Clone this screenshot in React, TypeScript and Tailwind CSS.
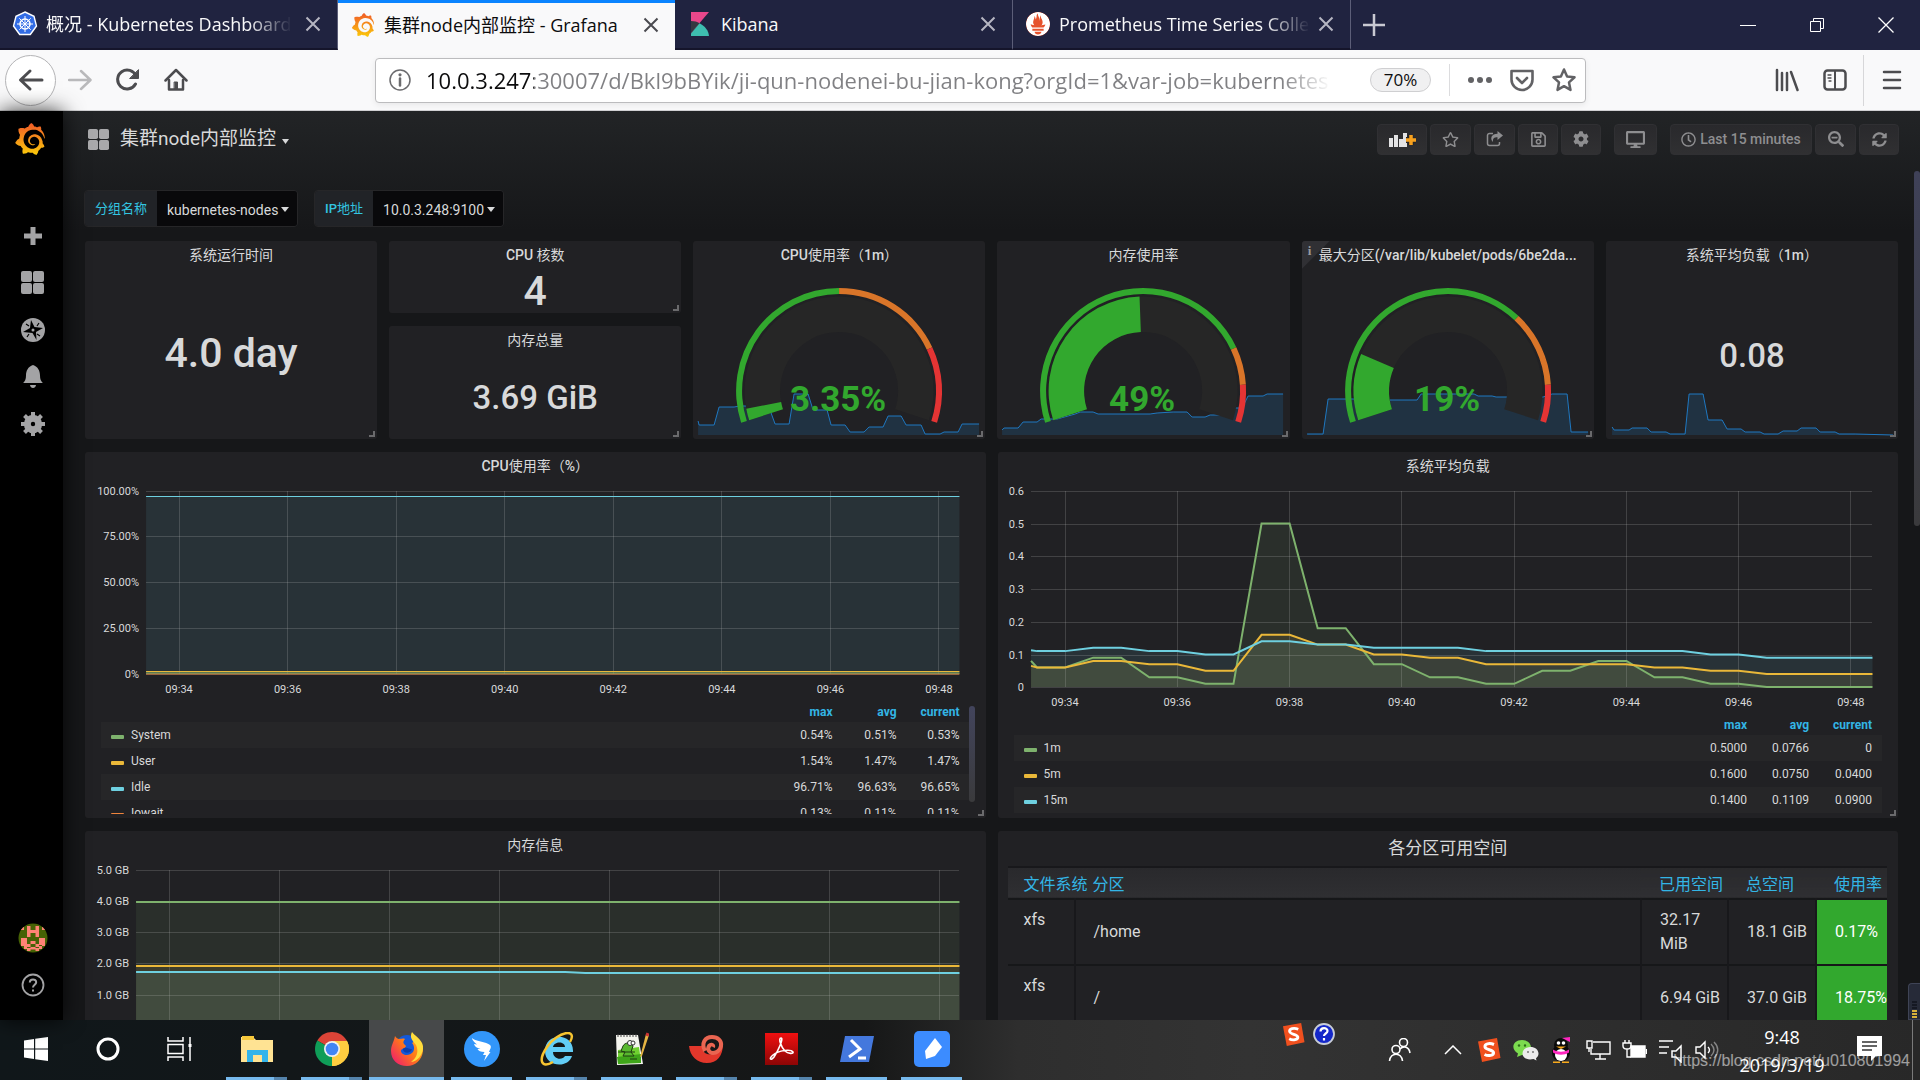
import React from "react";
import { SiGrafana, SiPrometheus } from "react-icons/si";
import {
  FaCog,
  FaDesktop,
  FaRegClock,
  FaRegSave,
  FaRegStar,
  FaSearchMinus,
  FaSyncAlt,
} from "react-icons/fa";

type Pt = [number, number];

const line = (pts: Pt[]) => pts.map(([x, y], i) => `${i ? "L" : "M"}${x} ${y}`).join("");
const area = (pts: Pt[], base: number) =>
  `${line(pts)}L${pts[pts.length - 1][0]} ${base}L${pts[0][0]} ${base}Z`;

/* ---------- browser chrome ---------- */

function CloseX({ dark }: { dark?: boolean }) {
  return (
    <svg viewBox="0 0 16 16" className={dark ? "size-4 text-[#4a4a4f]" : "size-4 text-[#b6b6c2]"} aria-hidden>
      <path d="M1.500 1.500l13 13M14.500 1.500l-13 13" stroke="currentColor" strokeWidth="2" fill="none" />
    </svg>
  );
}

function KibanaLogo() {
  return (
    <svg viewBox="0 0 18 24" className="h-6 w-[18px]" aria-hidden>
      <path d="M0 0h18L0 21z" fill="#e8478b" />
      <path d="M0 9c3.500 0 6 .7 8.600 2.200L0 21z" fill="#343741" />
      <path d="M8.600 11.200C14 14 17.500 18.500 18 24H0v-2.500z" fill="#3ebeb0" />
    </svg>
  );
}

function Tab({
  icon,
  title,
  active,
  fade,
}: {
  icon: React.ReactNode;
  title: string;
  active?: boolean;
  fade?: boolean;
}) {
  return (
    <div
      className={
        active
          ? "flex h-[50px] w-[337px] items-center border-t-[3px] border-[#0a84ff] bg-[#f9f9fa] pr-3 pb-[3px] pl-3 text-[#0c0c0d]"
          : "flex h-[50px] w-[338px] items-center border-r border-b-2 border-r-[#5c5e78] border-b-[#15152b] bg-[#202340] pr-3 pl-3 text-[#f9f9fa]"
      }
    >
      <button
        type="button"
        role="tab"
        aria-selected={!!active}
        className="flex min-w-0 flex-1 items-center gap-2 text-left text-[18px] leading-7"
      >
        <span className="flex w-[26px] shrink-0 justify-center">{icon}</span>
        <span
          className={
            fade
              ? "overflow-hidden whitespace-nowrap [mask-image:linear-gradient(to_right,black_82%,transparent)]"
              : "overflow-hidden whitespace-nowrap"
          }
        >
          {title}
        </span>
      </button>
      <button type="button" aria-label="Close tab" className="ml-1 flex size-6 items-center justify-center">
        <CloseX dark={active} />
      </button>
    </div>
  );
}

function TabStrip() {
  return (
    <div className="flex h-[50px] shrink-0 items-center bg-[#202340]">
      <div role="tablist" className="flex">
        <Tab
          fade
          title="概况 - Kubernetes Dashboard"
          icon={
            <svg viewBox="0 0 26 26" className="size-[26px]" aria-hidden>
              <path d="M13 1l9 4.300 2.500 9.700-6.200 8.500H7.700L1.500 15 4 5.300z" fill="#326ce5" stroke="#fff" strokeWidth="1.400" />
              <circle cx="13" cy="13" r="5" fill="none" stroke="#fff" strokeWidth="1.500" />
              <path d="M13 5v16M5 13h16M7.300 7.300l11.400 11.400M18.700 7.300L7.300 18.700" stroke="#fff" strokeWidth="1" />
            </svg>
          }
        />
        <Tab active title="集群node内部监控 - Grafana" icon={<SiGrafana size={24} fill="url(#grafana)" />} />
        <Tab title="Kibana" icon={<KibanaLogo />} />
        <Tab
          fade
          title="Prometheus Time Series Collection"
          icon={<SiPrometheus size={24} className="rounded-full bg-[#e6522c] text-white" />}
        />
      </div>
      <button type="button" aria-label="New tab" className="ml-[11px] flex size-6 items-center justify-center">
        <svg viewBox="0 0 22 22" className="size-[22px] text-[#c9c9d2]" aria-hidden>
          <path d="M11 0v22M0 11h22" stroke="currentColor" strokeWidth="2.500" />
        </svg>
      </button>
      <div className="ml-auto flex text-white">
        <button type="button" aria-label="Minimize" className="flex h-12 w-[69px] items-center justify-center">
          <svg viewBox="0 0 16 16" className="size-4" aria-hidden><path d="M0 8.500h16" stroke="currentColor" /></svg>
        </button>
        <button type="button" aria-label="Restore" className="flex h-12 w-[69px] items-center justify-center">
          <svg viewBox="0 0 16 16" className="size-4" aria-hidden>
            <path d="M1.500 4.500h10v10h-10zM4.500 4V1.500h10v10H12" fill="none" stroke="currentColor" />
          </svg>
        </button>
        <button type="button" aria-label="Close" className="flex h-12 w-[69px] items-center justify-center">
          <svg viewBox="0 0 16 16" className="size-4" aria-hidden>
            <path d="M.5.5l15 15M15.500.5l-15 15" stroke="currentColor" strokeWidth="1.300" />
          </svg>
        </button>
      </div>
    </div>
  );
}

function NavIcon({ label, children, className }: { label: string; children: React.ReactNode; className?: string }) {
  return (
    <button type="button" aria-label={label} className={`flex size-12 shrink-0 items-center justify-center ${className ?? ""}`}>
      <svg viewBox="0 0 24 24" className="size-6" fill="none" stroke="currentColor" strokeWidth="2.500" strokeLinecap="round" strokeLinejoin="round" aria-hidden>
        {children}
      </svg>
    </button>
  );
}

function NavBar() {
  return (
    <div className="flex h-[61px] shrink-0 items-center border-b border-[#d0d0d2] bg-[#f9f9fa] px-[5px] text-[#4c4c4f]">
      <button
        type="button"
        aria-label="Back"
        className="flex size-[51px] shrink-0 items-center justify-center rounded-full border border-[#b4b4b6] bg-white"
      >
        <svg viewBox="0 0 26 24" className="h-6 w-[26px]" fill="none" stroke="currentColor" strokeWidth="3" strokeLinecap="round" strokeLinejoin="round" aria-hidden>
          <path d="M24 12H3M12 3l-9.500 9 9.500 9" />
        </svg>
      </button>
      <NavIcon label="Forward" className="text-[#b9b9bb]"><path d="M1 12h21M13 3l9.500 9-9.500 9" /></NavIcon>
      <NavIcon label="Reload">
        <path d="M19.500 16A9.500 9.500 0 1 1 20 8" strokeWidth="3" />
        <path d="M22.500 2v8.500H14z" fill="currentColor" strokeWidth="1" />
      </NavIcon>
      <NavIcon label="Home">
        <path d="M1.500 12.500L12 2l10.500 10.500" />
        <path d="M5 12v9.500h14V12" />
        <path d="M10.500 14h3v7h-3z" fill="currentColor" strokeWidth="1" />
      </NavIcon>
      <div className="ml-[175px] flex h-[45px] w-[1211px] shrink items-center rounded-sm border border-[#bcbcbe] bg-white shadow-[0_2px_6px_rgba(0,0,0,0.07)]">
        <button type="button" aria-label="Site information" className="ml-3 shrink-0">
          <svg viewBox="0 0 24 24" className="size-6 text-[#6b6b6e]" aria-hidden>
            <circle cx="12" cy="12" r="10" fill="none" stroke="currentColor" strokeWidth="1.500" />
            <path d="M12 10.500v7" stroke="currentColor" strokeWidth="2.500" strokeLinecap="round" />
            <circle cx="12" cy="6.800" r="1.600" fill="currentColor" />
          </svg>
        </button>
        <input
          type="text"
          aria-label="Address"
          readOnly
          value="10.0.3.247:30007/d/Bkl9bBYik/ji-qun-nodenei-bu-jian-kong?orgId=1&var-job=kubernetes"
          className="ml-[14px] h-10 w-[920px] min-w-0 bg-[linear-gradient(to_right,#0c0c0d_108px,#808083_108px,#808083_855px,transparent_905px)] bg-clip-text text-[22px] text-transparent outline-none"
        />
        <button
          type="button"
          className="ml-auto h-6 w-[61px] shrink-0 rounded-full border border-[#cfcfd1] bg-[#f0f0f1] text-[17px] leading-[22px] text-[#0c0c0d]"
        >
          70%
        </button>
        <span className="ml-[18px] h-8 w-px shrink-0 bg-[#dcdcde]" />
        <div className="ml-[9px] flex text-[#626265]">
          <button type="button" aria-label="Page actions" className="flex h-10 w-[42px] items-center justify-center">
            <svg viewBox="0 0 26 8" className="h-2 w-[26px]" fill="currentColor" aria-hidden>
              <circle cx="4" cy="4" r="3" /><circle cx="13" cy="4" r="3" /><circle cx="22" cy="4" r="3" />
            </svg>
          </button>
          <button type="button" aria-label="Save to Pocket" className="flex h-10 w-[42px] items-center justify-center">
            <svg viewBox="0 0 24 24" className="size-6" fill="none" stroke="currentColor" strokeWidth="2.600" strokeLinecap="round" strokeLinejoin="round" aria-hidden>
              <path d="M1.500 3h21v8.500a10.500 10.500 0 0 1-21 0z" /><path d="M7 10l5 5 5-5" />
            </svg>
          </button>
          <button type="button" aria-label="Bookmark" className="flex h-10 w-[42px] items-center justify-center">
            <svg viewBox="0 0 24 24" className="size-6" fill="none" stroke="currentColor" strokeWidth="2.500" strokeLinejoin="round" aria-hidden>
              <path d="M12 1.500l3.100 7 7.400.8-5.500 5.100 1.500 7.500L12 18.200l-6.500 3.700L7 14.400 1.500 9.300l7.400-.8z" />
            </svg>
          </button>
        </div>
      </div>
      <div className="ml-auto flex items-center">
        <NavIcon label="Library">
          <path d="M2 2v20M7 5v17M12 5v17M16 4l6.500 18" />
        </NavIcon>
        <NavIcon label="Sidebars">
          <rect x="1.500" y="2.500" width="21" height="19" rx="3" />
          <path d="M12 3v18" strokeWidth="2" /><path d="M5 7h3M5 10h3M6 13h2" strokeWidth="1.300" />
        </NavIcon>
        <span className="ml-1 h-[51px] w-px bg-[#d7d7d9]" />
        <NavIcon label="Menu" className="mr-[-1px] ml-1">
          <path d="M4 4h16M4 12h16M4 20h16" />
        </NavIcon>
      </div>
    </div>
  );
}

/* ---------- Grafana side menu ---------- */

function GridGlyph({ className }: { className: string }) {
  return (
    <svg viewBox="0 0 23 23" className={className} fill="currentColor" aria-hidden>
      <rect x="0" y="0" width="11" height="11" rx="2" /><rect x="12" y="0" width="11" height="11" rx="2" />
      <rect x="0" y="12" width="11" height="11" rx="2" /><rect x="12" y="12" width="11" height="11" rx="2" />
    </svg>
  );
}

function SideButton({ label, children }: { label: string; children: React.ReactNode }) {
  return (
    <button type="button" aria-label={label} className="flex h-[47px] w-full items-center justify-center text-[#a3a3a5]">
      {children}
    </button>
  );
}

function SideMenu() {
  return (
    <nav className="z-10 flex w-[63px] shrink-0 flex-col items-center bg-black shadow-[0_0_20px_rgba(0,0,0,0.8)]">
      <a href="#home" aria-label="Grafana" className="mt-3 mr-[3px] block">
        <SiGrafana size={32} fill="url(#grafana)" />
      </a>
      <div className="mt-[57px] w-full pl-[2px]">
        <SideButton label="Create">
          <svg viewBox="0 0 18 18" className="size-[18px]" aria-hidden><path d="M9 0v18M0 9h18" stroke="currentColor" strokeWidth="5" /></svg>
        </SideButton>
        <SideButton label="Dashboards"><GridGlyph className="size-[23px]" /></SideButton>
        <SideButton label="Explore">
          <svg viewBox="0 0 24 24" className="size-[24px]" aria-hidden>
            <circle cx="12" cy="12" r="12" fill="currentColor" />
            <path d="M10 2l3.500 7L22 10l-7 4 .5 8-4-7L2 14l7-4z" fill="#000" />
            <path d="M5 6l3 2M18 5l-2 3M6 19l2-3M19 18l-3-2" stroke="#000" strokeWidth="1.200" />
            <circle cx="12" cy="12" r="1.500" fill="currentColor" />
          </svg>
        </SideButton>
        <SideButton label="Alerting">
          <svg viewBox="0 0 20 24" className="h-6 w-5" fill="currentColor" aria-hidden>
            <path d="M10 0c5 1.500 7 6 7 10.500 0 4 1 5.500 2.800 7.500H.2C2 16 3 14.500 3 10.500 3 6 5 1.500 10 0zM7 20h6c-.4 4-5.600 4-6 0z" />
          </svg>
        </SideButton>
        <SideButton label="Configuration">
          <svg viewBox="0 0 24 24" className="size-6" aria-hidden>
            <circle cx="12" cy="12" r="5.700" fill="none" stroke="currentColor" strokeWidth="7" />
            <path d="M12 0v5M12 19v5M0 12h5M19 12h5M3.500 3.500L7 7M17 17l3.500 3.500M20.500 3.500L17 7M7 17l-3.500 3.500" stroke="currentColor" strokeWidth="4" />
          </svg>
        </SideButton>
      </div>
      <div className="mt-auto mb-3 w-full pl-[2px]">
        <SideButton label="Profile">
          <svg viewBox="0 0 30 30" className="size-[30px]" aria-hidden>
            <clipPath id="avatarClip"><circle cx="15" cy="15" r="14.500" /></clipPath>
            <g clipPath="url(#avatarClip)">
              <rect width="30" height="30" fill="#466204" />
              <path
                d="M9 3h3.500v4h5V3H21v11h-3.500v-4h-5v4H9zM3 4h3v3H3zM24 4h3v3h-3zM3 15h6v6h3.500v3H9v-1H3zM27 15h-6v6h-3.500v3H21v-1h6zM12.500 18h5v3h-5zM6 22h3v4H6zM21 22h3v4h-3zM12.500 24h5v2.500h-5zM9 25h3.500v3H9zM17.500 25H21v3h-3.500z"
                fill="#ff8375"
              />
            </g>
          </svg>
        </SideButton>
        <SideButton label="Help">
          <svg viewBox="0 0 24 24" className="size-6" fill="none" stroke="currentColor" strokeWidth="1.800" aria-hidden>
            <circle cx="12" cy="12" r="10.500" />
            <path d="M8.800 9.500c0-4 6.400-4 6.400-.3 0 2.500-3.200 2.600-3.200 5.300M12 16.500v2" strokeWidth="2" />
          </svg>
        </SideButton>
      </div>
    </nav>
  );
}

/* ---------- dashboard header ---------- */

function ToolButton({ label, children, className }: { label: string; children: React.ReactNode; className?: string }) {
  return (
    <button
      type="button"
      aria-label={label}
      className={`flex h-[31px] items-center justify-center rounded-sm border border-[#303033] bg-linear-to-b from-[#29292c] to-[#303032] text-[#8e8e90] ${className ?? "w-[40px]"}`}
    >
      {children}
    </button>
  );
}

function DashHeader() {
  return (
    <header className="flex h-14 items-center pr-[21px] pl-[25px]">
      <button type="button" className="flex items-center text-[19px] text-[#d8d9da]">
        <GridGlyph className="mr-[11px] size-[21px] text-[#a9a9ab]" />
        集群node内部监控
        <svg viewBox="0 0 8 5" className="mt-1 ml-[6px] h-[5px] w-2" fill="currentColor" aria-hidden><path d="M0 0h7L3.500 5z" /></svg>
      </button>
      <div className="ml-auto flex items-center gap-[3px]">
        <ToolButton label="Add panel" className="w-[50px]">
          <svg viewBox="0 0 27 17" className="h-[17px] w-[27px]" aria-hidden>
            <path d="M0 7h4v9H0zM5 4h4v12H5zM10 8h4v8h-4zM14 2h4v14h-4z" fill="#e3e3e4" />
            <path d="M22 4v10M17 9h10" stroke="#262628" strokeWidth="6" />
            <path d="M22 4v10M17 9h10" stroke="#f7a11e" strokeWidth="3.500" />
          </svg>
        </ToolButton>
        <ToolButton label="Star" className="w-[41px]"><FaRegStar size={17} /></ToolButton>
        <ToolButton label="Share" className="w-[41px]">
          <svg viewBox="0 0 17 16" className="h-4 w-[17px]" aria-hidden>
            <path d="M7 2.500H3.500a2 2 0 0 0-2 2v8a2 2 0 0 0 2 2h8a2 2 0 0 0 2-2V11" fill="none" stroke="currentColor" strokeWidth="1.500" />
            <path d="M11.500 0L17 4.500 11.500 9V6.300C8 6.300 6.500 7.500 7 11 3.500 7.500 5.500 2.700 11.500 2.700z" fill="currentColor" />
          </svg>
        </ToolButton>
        <ToolButton label="Save"><FaRegSave size={17} /></ToolButton>
        <ToolButton label="Settings"><FaCog size={16} /></ToolButton>
        <ToolButton label="Cycle view mode" className="mx-[10px] w-[43px]"><FaDesktop size={19} /></ToolButton>
        <ToolButton label="Time range" className="w-[142px] gap-1 text-sm font-medium"><FaRegClock size={15} />Last 15 minutes</ToolButton>
        <ToolButton label="Zoom out" className="w-[41px]"><FaSearchMinus size={16} /></ToolButton>
        <ToolButton label="Refresh"><FaSyncAlt size={15} /></ToolButton>
      </div>
    </header>
  );
}

/* Latin runs are set in medium weight, Chinese runs in regular. */
function Mixed({ text }: { text: string }) {
  return (
    <>
      {text.split(/([\x21-\x7e]+)/).map((part, i) =>
        i % 2 ? <span key={i}>{part}</span> : <span key={i} className="font-normal">{part}</span>,
      )}
    </>
  );
}

function Variable({ id, label, value, className }: { id: string; label: string; value: string; className: string }) {
  return (
    <div className="flex h-[37px] overflow-hidden rounded-sm border border-[#262628]">
      <label htmlFor={id} className="flex items-center bg-[#212327] px-[10px] text-[13px] font-medium text-[#33c5e0]">
        <Mixed text={label} />
      </label>
      <div className="relative flex">
        <select id={id} className={`appearance-none bg-[#09090b] pt-[2px] pl-[10px] text-sm text-[#d8d9da] outline-none ${className}`}>
          <option>{value}</option>
        </select>
        <svg viewBox="0 0 8 5" className="pointer-events-none absolute top-[16px] right-2 h-[5px] w-2" fill="#d8d9da" aria-hidden>
          <path d="M0 0h8L4 5z" />
        </svg>
      </div>
    </div>
  );
}

/* ---------- panels ---------- */

function Panel({ title, children, className, info, big }: {
  title: string;
  children?: React.ReactNode;
  className?: string;
  info?: boolean;
  big?: boolean;
}) {
  return (
    <section className={`relative flex min-w-0 flex-col overflow-hidden rounded-[3px] bg-[#212124] ${className ?? ""}`}>
      {info && (
        <span className="absolute top-0 left-0 h-7 w-7 bg-[#303034] pl-[6px] font-['Liberation_Serif',serif] text-[13px] font-bold text-[#9a9a9c] [clip-path:polygon(0_0,100%_0,0_100%)]">
          i
        </span>
      )}
      <h2
        className={
          big
            ? "h-[35px] shrink-0 pt-[5px] text-center text-[17px] leading-[24px] text-[#d8d9da]"
            : "h-[30px] shrink-0 truncate px-4 text-center text-[14px] leading-[29px] font-medium text-[#d8d9da]"
        }
      >
        <Mixed text={title} />
      </h2>
      {children}
      <svg viewBox="0 0 6 6" className="absolute right-[2px] bottom-[2px] size-[6px]" aria-hidden>
        <path d="M5 0v5H0" fill="none" stroke="#6a6a6c" strokeWidth="2" />
      </svg>
    </section>
  );
}

function Stat({ value, className }: { value: string; className: string }) {
  return <div className={`flex flex-1 items-center justify-center font-medium text-[#d8d9da] ${className}`}>{value}</div>;
}

const CX = 146;
const CY = 150;

function ring(from: number, to: number, r1: number, r2: number) {
  const at = (f: number, r: number) => {
    const t = Math.PI * (1.1 - 1.2 * f);
    return `${(CX + r * Math.cos(t)).toFixed(2)} ${(CY - r * Math.sin(t)).toFixed(2)}`;
  };
  const large = (to - from) * 216 > 180 ? 1 : 0;
  return `M${at(from, r2)}A${r2} ${r2} 0 ${large} 1 ${at(to, r2)}L${at(to, r1)}A${r1} ${r1} 0 ${large} 0 ${at(from, r1)}Z`;
}

function Spark({ pts }: { pts: Pt[] }) {
  return (
    <>
      <path d={area(pts, 194)} fill="#1f76bd" fillOpacity="0.2" />
      <path d={line(pts)} fill="none" stroke="#1f78c1" strokeWidth="1" />
    </>
  );
}

function Gauge({ value, text, stops, pts }: { value: number; text: string; stops: [number, number]; pts: Pt[] }) {
  return (
    <svg viewBox="0 30 292 168" className="block w-full" role="img" aria-label={text}>
      <Spark pts={pts} />
      <path d={ring(0, 1, 59, 94.500)} fill="#262626" />
      <path d={ring(0, value, 59, 94.500)} fill="#32a82e" />
      <path d={ring(0, stops[0], 97, 103)} fill="#32a82e" />
      <path d={ring(stops[0], stops[1], 97, 103)} fill="#d97529" />
      <path d={ring(stops[1], 1, 97, 103)} fill="#e43434" />
      <text x="145" y="170" textAnchor="middle" fontSize="35" fontWeight="700" fill="#32a82e">{text}</text>
    </svg>
  );
}

const cpuSpark: Pt[] = [[5,180],[6,184],[21,184],[26,166],[41,166],[47,165],[75,165],[78,172],[82,183],[96,183],[101,153],[115,153],[120,169],[134,169],[138,184],[152,184],[157,191],[171,191],[176,186],[190,186],[195,175],[208,175],[213,184],[228,184],[232,193],[247,193],[251,191],[265,191],[269,183],[286,183]];
const memSpark: Pt[] = [[5,189],[7,187],[21,187],[26,181],[40,181],[44,178],[60,178],[78,173],[83,171],[96,171],[101,173],[153,173],[160,172],[176,171],[190,171],[195,176],[208,176],[213,174],[228,174],[239,167],[245,167],[251,155],[266,155],[270,153],[286,153]];
const diskSpark: Pt[] = [[5,193],[21,193],[26,158],[52,158],[87,159],[115,159],[119,153],[172,153],[176,155],[190,155],[194,156],[241,156],[250,153],[265,153],[269,191],[286,191]];
const loadSpark: Pt[] = [[6,186],[8,189],[23,189],[26,187],[41,187],[45,191],[60,191],[64,193],[79,193],[83,153],[97,153],[102,179],[116,179],[121,188],[135,188],[139,191],[154,191],[158,193],[172,193],[177,190],[191,190],[195,187],[210,187],[214,191],[229,191],[233,193],[249,193],[287,194]];

interface Series { color: string; pts: Pt[]; fill?: number; width?: number }

function Chart({ bottom, left, right, base, top, yTicks, xStart, xStep, series }: {
  bottom: number;
  left: number;
  right: number;
  base: number;
  top: number;
  yTicks: { y: number; label: string }[];
  xStart: number;
  xStep: number;
  series: Series[];
}) {
  const times = ["09:34", "09:36", "09:38", "09:40", "09:42", "09:44", "09:46", "09:48"];
  return (
    <svg viewBox={`0 30 900 ${bottom - 30}`} className="block w-full shrink-0" role="img" aria-label="graph">
      {series.map((s, i) => <path key={i} d={area(s.pts, base)} fill={s.color} fillOpacity={s.fill ?? 0.1} />)}
      <g stroke="#c8c8c8" strokeOpacity="0.2" strokeWidth="1" shapeRendering="crispEdges">
        {yTicks.map((t) => <path key={t.label} d={`M${left} ${t.y}H${right}`} />)}
        {times.map((t, i) => <path key={t} d={`M${xStart + i * xStep} ${top}V${base}`} />)}
      </g>
      {series.map((s, i) => <path key={i} d={line(s.pts)} fill="none" stroke={s.color} strokeWidth={s.width ?? 2} />)}
      <g fontSize="11" fill="#d8d9da">
        {yTicks.map((t) => <text key={t.label} x={left - 7} y={t.y + 4} textAnchor="end">{t.label}</text>)}
        {times.map((t, i) => <text key={t} x={xStart + i * xStep} y={base + 19} textAnchor="middle">{t}</text>)}
      </g>
    </svg>
  );
}

function Legend({ rows, colClass }: {
  rows: { color: string; name: string; v: [string, string, string] }[];
  colClass: string;
}) {
  return (
    <table className="mx-4 text-xs text-[#d8d9da]">
      <thead>
        <tr className="h-5 text-right font-bold text-[#33b5e5]">
          <th />
          <th className={`p-0 text-right ${colClass}`}>max</th>
          <th className={`p-0 text-right ${colClass}`}>avg</th>
          <th className="w-[73px] p-0 pr-[10px] text-right">current</th>
        </tr>
      </thead>
      <tbody>
        {rows.map((r) => (
          <tr key={r.name} className="h-[26px] odd:bg-[#262628]">
            <td className="p-0 pl-[10px]">
              <span className="flex items-center gap-[7px]">
                <svg viewBox="0 0 13 4" className="mt-1 h-1 w-[13px]" aria-hidden><rect width="13" height="4" rx="1" fill={r.color} /></svg>
                {r.name}
              </span>
            </td>
            <td className="p-0 text-right">{r.v[0]}</td>
            <td className="p-0 text-right">{r.v[1]}</td>
            <td className="p-0 pr-[10px] text-right">{r.v[2]}</td>
          </tr>
        ))}
      </tbody>
    </table>
  );
}

const GREEN = "#7eb26d";
const YELLOW = "#eab839";
const CYAN = "#6ed0e0";
const ORANGE = "#ef843c";

const load1 = [.08,.06,.06,.09,.09,.03,.03,.01,.01,.5,.5,.18,.18,.07,.07,.03,.03,.01,.01,.05,.05,.08,.08,.03,.03,.01,.01,0,0,0,0,0];
const load5 = [.065,.06,.06,.08,.08,.07,.07,.05,.05,.16,.16,.13,.13,.1,.1,.09,.09,.07,.07,.07,.07,.07,.07,.06,.06,.05,.05,.04,.04,.04,.04,.04];
const load15 = [.113,.11,.11,.12,.12,.11,.11,.1,.1,.14,.14,.13,.13,.12,.12,.12,.12,.11,.11,.11,.11,.11,.11,.11,.11,.1,.1,.09,.09,.09,.09,.09];
const loadPts = (vals: number[]): Pt[] =>
  vals.map((v, i) => [i === 0 ? 33 : Math.min(39 + (i - 1) * 28.05, 874), 235 - v * 327]);

function DiskTable() {
  const rows = [
    { fs: "xfs", mount: "/home", used: "32.17 MiB", total: "18.1 GiB", pct: "0.17%" },
    { fs: "xfs", mount: "/", used: "6.94 GiB", total: "37.0 GiB", pct: "18.75%" },
  ];
  return (
    <div className="mr-[11px] ml-[10px] overflow-hidden border-t-2 border-[#18181b]">
      <table className="w-full table-fixed text-base leading-6 text-[#d8d9da]">
        <thead>
          <tr className="h-[31px] border-b-2 border-[#161719] bg-linear-to-b from-[#29292c] to-[#2f2f32] text-left whitespace-nowrap text-[#33b5e5]">
            <th className="w-[67px] p-0 pt-1 pl-4 font-normal">文件系统</th>
            <th className="p-0 pt-1 pl-[18px] font-normal">分区</th>
            <th className="w-[87px] p-0 pt-1 pl-[18px] font-normal">已用空间</th>
            <th className="w-[88px] p-0 pt-1 pl-[18px] font-normal">总空间</th>
            <th className="w-[71px] p-0 pt-1 pl-[18px] font-normal">使用率</th>
          </tr>
        </thead>
        <tbody>
          {rows.map((r) => (
            <tr key={r.mount} className="h-[66px] border-b-2 border-[#161719]">
              <td className="border-r-2 border-[#18181b] p-0 pt-2 pl-4 align-top">{r.fs}</td>
              <td className="border-r-2 border-[#18181b] p-0 pl-[18px]">{r.mount}</td>
              <td className="border-r-2 border-[#18181b] p-0 pl-[18px]">{r.used}</td>
              <td className="border-r-2 border-[#18181b] p-0 pl-[18px] whitespace-nowrap">{r.total}</td>
              <td className="bg-[#32a82e] p-0 pl-[18px] whitespace-nowrap text-white">{r.pct}</td>
            </tr>
          ))}
        </tbody>
      </table>
    </div>
  );
}

function Dashboard() {
  return (
    <main className="relative min-w-0 flex-1 overflow-hidden bg-[linear-gradient(#222426,#161719_120px)]">
      <DashHeader />
      <div className="mt-[23px] flex gap-4 pl-[21px]">
        <Variable id="var-job" label="分组名称" value="kubernetes-nodes" className="w-[140px]" />
        <Variable id="var-node" label="IP地址" value="10.0.3.248:9100" className="w-[130px]" />
      </div>
      <div className="mt-[14px] flex flex-col gap-[13px] px-[22px]">
        <div className="grid h-[198px] grid-cols-6 gap-x-3">
          <Panel title="系统运行时间"><Stat value="4.0 day" className="pb-[2px] text-[41px]" /></Panel>
          <div className="flex flex-col gap-[13px]">
            <Panel title="CPU 核数" className="h-[72px]"><Stat value="4" className="pb-[2px] text-[41px] leading-9" /></Panel>
            <Panel title="内存总量" className="flex-1"><Stat value="3.69 GiB" className="text-[33px]" /></Panel>
          </div>
          <Panel title="CPU使用率（1m）"><Gauge value={0.0335} text="3.35%" stops={[0.5, 0.8]} pts={cpuSpark} /></Panel>
          <Panel title="内存使用率"><Gauge value={0.49} text="49%" stops={[0.8, 0.9]} pts={memSpark} /></Panel>
          <Panel title="最大分区(/var/lib/kubelet/pods/6be2da..." info>
            <Gauge value={0.19} text="19%" stops={[0.7, 0.9]} pts={diskSpark} />
          </Panel>
          <Panel title="系统平均负载（1m）">
            <svg viewBox="0 30 292 168" className="block w-full" role="img" aria-label="0.08">
              <Spark pts={loadSpark} />
              <text x="146" y="126" textAnchor="middle" fontSize="33" fontWeight="500" fill="#d8d9da">0.08</text>
            </svg>
          </Panel>
        </div>
        <div className="grid grid-cols-2 gap-x-3">
          <Panel title="CPU使用率（%）" className="h-[366px] pb-1">
            <Chart
              bottom={250} left={61} right={874} base={222} top={39} xStart={94} xStep={108.500}
              yTicks={[{ y: 39, label: "100.00%" }, { y: 84, label: "75.00%" }, { y: 130, label: "50.00%" }, { y: 176, label: "25.00%" }, { y: 222, label: "0%" }]}
              series={[
                { color: CYAN, pts: [[61, 44.500], [874, 44.500]], width: 1 },
                { color: ORANGE, pts: [[61, 222], [874, 222]], width: 1 },
                { color: GREEN, pts: [[61, 221], [874, 221]], width: 1 },
                { color: YELLOW, pts: [[61, 219.500], [874, 219.500]], width: 1 },
              ]}
            />
            <div className="relative flex h-[112px] flex-col overflow-hidden">
              <Legend
                colClass="w-16"
                rows={[
                  { color: GREEN, name: "System", v: ["0.54%", "0.51%", "0.53%"] },
                  { color: YELLOW, name: "User", v: ["1.54%", "1.47%", "1.47%"] },
                  { color: CYAN, name: "Idle", v: ["96.71%", "96.63%", "96.65%"] },
                  { color: ORANGE, name: "Iowait", v: ["0.13%", "0.11%", "0.11%"] },
                ]}
              />
              <span className="absolute top-1 right-[11px] h-24 w-[6px] rounded-sm bg-linear-to-b from-[#42445c] to-[#3a3a3c]" />
            </div>
          </Panel>
          <Panel title="系统平均负载" className="h-[366px]">
            <Chart
              bottom={263} left={33} right={874} base={235} top={39} xStart={67} xStep={112.200}
              yTicks={["0.6", "0.5", "0.4", "0.3", "0.2", "0.1", "0"].map((label, i) => ({ label, y: Math.round(39 + i * 32.700) }))}
              series={[
                { color: GREEN, pts: loadPts(load1) },
                { color: YELLOW, pts: loadPts(load5) },
                { color: CYAN, pts: loadPts(load15) },
              ]}
            />
            <Legend
              colClass="w-[62px]"
              rows={[
                { color: GREEN, name: "1m", v: ["0.5000", "0.0766", "0"] },
                { color: YELLOW, name: "5m", v: ["0.1600", "0.0750", "0.0400"] },
                { color: CYAN, name: "15m", v: ["0.1400", "0.1109", "0.0900"] },
              ]}
            />
          </Panel>
        </div>
        <div className="grid grid-cols-2 gap-x-3">
          <Panel title="内存信息" className="h-[366px]">
            <Chart
              bottom={250} left={51} right={874} base={195} top={39} xStart={84} xStep={110}
              yTicks={[{ y: 39, label: "5.0 GB" }, { y: 70, label: "4.0 GB" }, { y: 101, label: "3.0 GB" }, { y: 132, label: "2.0 GB" }, { y: 164, label: "1.0 GB" }]}
              series={[
                { color: GREEN, pts: [[51, 71], [874, 71]] },
                { color: YELLOW, pts: [[51, 135], [874, 135]] },
                { color: CYAN, pts: [[51, 141], [480, 141], [500, 142], [874, 142]] },
              ]}
            />
          </Panel>
          <Panel title="各分区可用空间" className="h-[366px]" big><DiskTable /></Panel>
        </div>
      </div>
      <span className="absolute top-[60px] right-0 h-[355px] w-[6px] rounded-sm bg-linear-to-b from-[#3f4158] to-[#3a3a3c]" />
      <span className="absolute right-0 bottom-0 flex h-[37px] w-3 flex-col justify-end gap-px rounded-tl border border-r-0 border-[#3f4456] bg-[#262a38] px-[3px] pb-px">
        <i className="h-[2px] bg-[#151823]" /><i className="h-[2px] bg-[#151823]" /><i className="h-[2px] bg-[#151823]" />
        <i className="h-[2px] bg-[#d8b13a]" /><i className="h-[2px] bg-[#d8b13a]" /><i className="h-[2px] bg-[#d8b13a]" />
      </span>
    </main>
  );
}

/* ---------- Windows taskbar ---------- */

function Task({ label, children, running, active, stacked, narrow }: {
  label: string;
  children: React.ReactNode;
  running?: boolean;
  active?: boolean;
  stacked?: boolean;
  narrow?: boolean;
}) {
  return (
    <button
      type="button"
      aria-label={label}
      className={
        active
          ? "flex w-[75px] flex-col bg-[#47494a]"
          : narrow
            ? "flex w-[72px] flex-col"
            : "flex w-[75px] flex-col px-[7px]"
      }
    >
      <span className="flex w-full flex-1 items-center justify-center">{children}</span>
      <span className={running ? "flex h-[3px] w-full justify-end bg-[#76b9ed]" : "h-[3px]"}>
        {stacked && <span className="h-[3px] w-[13px] bg-[#5584ac]" />}
      </span>
    </button>
  );
}

function SogouIcon({ className }: { className: string }) {
  return (
    <svg viewBox="0 0 24 24" className={className} aria-hidden>
      <path d="M1 3.500L20 0l3.500 20L5 24z" fill="#f0501e" />
      <path d="M17 6.500C12 4.500 7.500 6 8 9c.5 3 8 2.500 8.500 5.500.4 3-5 4-9 2" fill="none" stroke="#fff" strokeWidth="3" />
    </svg>
  );
}

function Taskbar() {
  return (
    <footer className="relative flex h-[60px] shrink-0 bg-[linear-gradient(to_right,#10171a,#161717_45%,#2e2e2e_53%,#333333_65%,#282828)] text-white">
      <Task label="Start" narrow>
        <svg viewBox="0 0 24 24" className="size-6" fill="#fff" aria-hidden>
          <path d="M0 3.500L10 2v9.500H0zM11.200 1.800L24 0v11.500H11.200zM0 12.500h10V22L0 20.500zM11.200 12.500H24V24l-12.800-1.800z" />
        </svg>
      </Task>
      <Task label="Cortana" narrow>
        <svg viewBox="0 0 24 24" className="size-6" aria-hidden><circle cx="12" cy="12" r="10" fill="none" stroke="#fff" strokeWidth="3" /></svg>
      </Task>
      <Task label="Task view">
        <svg viewBox="0 0 25 24" className="mr-1 h-6 w-[25px]" fill="none" stroke="#fff" strokeWidth="1.500" aria-hidden>
          <path d="M1 0v4h15V0M1 7.500h15v9H1zM1 24v-4h15v4M23 0v24" /><path d="M21.500 7h3v3h-3z" fill="#fff" stroke="none" />
        </svg>
      </Task>
      <Task label="File Explorer" running stacked>
        <svg viewBox="0 0 32 28" className="h-7 w-8" aria-hidden>
          <path d="M0 2h12l3 3h17v22H0z" fill="#ffe393" /><path d="M1 1h12v4H1z" fill="#f7c93c" />
          <path d="M6 15h21v12h-6v-7h-9v7H6z" fill="#33b4ea" />
        </svg>
      </Task>
      <Task label="Chrome" running stacked>
        <svg viewBox="0 0 34 34" className="size-[34px]" aria-hidden>
          <path d="M17 17L2.300 8.500A17 17 0 0 1 31.700 8.500z" fill="#db4437" /><path d="M17 17l14.700-8.500A17 17 0 0 1 17 34z" fill="#ffcd40" />
          <path d="M17 17v17A17 17 0 0 1 2.300 8.500z" fill="#0f9d58" /><path d="M17 9h15A17 17 0 0 1 17 34l7-13z" fill="#ffcd40" />
          <circle cx="17" cy="17" r="8" fill="#f1f1f1" /><circle cx="17" cy="17" r="6.300" fill="#4285f4" />
        </svg>
      </Task>
      <Task label="Firefox" running active>
        <svg viewBox="0 0 34 34" className="size-[34px]" aria-hidden>
          <circle cx="17" cy="14" r="11" fill="#1458d8" />
          <path d="M5 4c1 2 3 3 4 3 2 0 4-1 6 0-2 2-2 4-1 5l2 2c-1 3-5 2-5 5 0 4 8 6 12 1 2-3 1-7-1-9 3-1 3-6 2-8 7 4 9 10 9 16-1 9-8 15-16 15C8 34 1 28 1 19 1 13 4 10 5 4z" fill="url(#fox)" />
          <path d="M22 0c-3 6 1 9 4 13 3 6 1 13-5 17 7-1 11-7 12-13C34 9 27 6 22 0z" fill="#ffdc3c" />
          <path d="M13 17c4-3 6 1 9 0-1 5-9 5-9 0z" fill="#0c3fae" />
        </svg>
      </Task>
      <Task label="DingTalk" running>
        <svg viewBox="0 0 36 36" className="size-9" aria-hidden>
          <circle cx="18" cy="18" r="18" fill="#3296fa" />
          <path d="M8 7c2 3 15 4 18 7 2 2 0 4-1 7h1.500L20 30l2-6h-3l1.500-3c-4 0-6-1-7-3l3 0c-4-1-6-3-6.500-5l3 .5C10 11 8 9 8 7z" fill="#fff" />
        </svg>
      </Task>
      <Task label="Internet Explorer" running stacked>
        <svg viewBox="0 0 34 34" className="size-[34px]" aria-hidden>
          <path d="M33 20H13c0 7 9 9 12 4h7C28 37 5 35 5 19 5 0 34 0 33 20zM13 15h12c0-6-11-6-12 0z" fill="#62cdf6" />
          <path d="M30 10C38-4 18-1 7 15c-9 13-6 22 6 15" fill="none" stroke="#f6c431" strokeWidth="2.500" />
        </svg>
      </Task>
      <Task label="Notepad++" running>
        <svg viewBox="0 0 34 34" className="size-[34px]" aria-hidden>
          <path d="M1 3h22l5 29-26 1z" fill="#f4f4ee" /><path d="M3 2v3M6 2v3M9 2v3M12 2v3M15 2v3M18 2v3M21 2v3" stroke="#444" />
          <path d="M3 18l21-3 2 15-23 2z" fill="#6fd130" /><path d="M2 25l24-3v9L3 32z" fill="#3fa51a" />
          <path d="M8 14c2-4 8-4 10 0l-2 6 3 4H8l2-4-4-1z" fill="#58b82e" stroke="#1e3c10" /><path d="M3 20h17M15 27h7" stroke="#1e3c10" />
          <circle cx="15" cy="11" r="2.500" fill="#fff" stroke="#333" /><circle cx="18" cy="11" r="2" fill="#fff" stroke="#333" />
          <path d="M25 25L31 2l3 1-7 21z" fill="#e5b443" /><path d="M31 2l3 1" stroke="#c33" strokeWidth="3" />
        </svg>
      </Task>
      <Task label="Snail" running stacked>
        <svg viewBox="0 0 35 30" className="h-[30px] w-[35px]" aria-hidden>
          <path d="M0 12h13c0 7 5 9 10 8l11-10c0 12-6 19-16 19C8 29 1 22 0 12z" fill="#e2372b" />
          <path d="M16 17C12 9 16 3 23 3c6 0 10 4 9 9s-5 7-8 7c-4 0-6-4-4-7 2-2 5-1 4 1" fill="none" stroke="#e96551" strokeWidth="4" />
        </svg>
      </Task>
      <Task label="Acrobat Reader" running stacked>
        <svg viewBox="0 0 33 32" className="h-8 w-[33px]" aria-hidden>
          <rect width="33" height="32" fill="url(#acro)" />
          <path d="M16 5c-3 0 0 9 4 13 3 3 9 3 8 1-2-3-14-2-20 3-5 4-2 6 1 2C13 18 19 5 16 5z" fill="none" stroke="#fff" strokeWidth="1.600" />
        </svg>
      </Task>
      <Task label="PowerShell" running>
        <svg viewBox="0 0 34 28" className="h-7 w-[34px]" aria-hidden>
          <path d="M5 1h29l-5 26H0z" fill="#4478dd" /><path d="M11 5l9 9-11 8M18 23h8" fill="none" stroke="#fff" strokeWidth="3" />
        </svg>
      </Task>
      <Task label="Notes" running>
        <svg viewBox="0 0 36 36" className="size-9" aria-hidden>
          <rect width="36" height="36" rx="5" fill="#3c8cff" /><path d="M21 7l7 9-7 9-9 3-1-8z" fill="#fff" />
        </svg>
      </Task>

      <div className="ml-auto flex items-center">
        <div className="mr-[53px] mb-[32px] flex items-center gap-2">
          <SogouIcon className="size-[23px]" />
          <svg viewBox="0 0 22 22" className="size-[22px]" aria-hidden>
            <circle cx="11" cy="11" r="10" fill="#1427c9" stroke="#c8cdd8" strokeWidth="1.800" />
            <path d="M7.500 8.500c0-4.500 7-4.500 7-.5 0 2.500-3.500 2.500-3.500 5M11 15v2.500" fill="none" stroke="#fff" strokeWidth="2.200" />
          </svg>
        </div>
        <svg viewBox="0 0 24 24" className="mr-8 size-6" fill="none" stroke="#fff" strokeWidth="1.600" aria-label="People">
          <circle cx="15.500" cy="4.500" r="4" /><path d="M12 11c4-4 9-2 10 4" /><circle cx="8" cy="11.500" r="4" /><path d="M1.500 23c1-9 12-9 13 0" />
        </svg>
        <svg viewBox="0 0 18 10" className="mr-[15px] h-[10px] w-[18px]" fill="none" stroke="#fff" strokeWidth="1.500" aria-label="Show hidden icons">
          <path d="M1 9l8-8 8 8" />
        </svg>
        <SogouIcon className="mr-3 size-6" />
        <svg viewBox="0 0 26 22" className="mr-[11px] h-[22px] w-[26px]" aria-label="WeChat">
          <path d="M9 1c5 0 9 3 9 7.500S14 16 9 16l-5 2 1-3.500C-3 10 0 1 9 1z" fill="#7cdb4f" />
          <path d="M17.500 8c4.500 0 8 2.700 8 6.500 0 2-1 3.500-2.500 4.700l.5 2.300-3-1.500c-6 1.500-11-1-11-5.500C9.500 10.700 13 8 17.500 8z" fill="#ececec" />
          <circle cx="6" cy="6.500" r="1.200" fill="#2c6b17" /><circle cx="12" cy="6.500" r="1.200" fill="#2c6b17" />
          <circle cx="15" cy="13" r="1" fill="#777" /><circle cx="20" cy="13" r="1" fill="#777" />
        </svg>
        <svg viewBox="0 0 22 26" className="mr-[14px] h-[26px] w-[22px]" aria-hidden>
          <ellipse cx="11" cy="16" rx="9" ry="8.500" fill="#0b0b0b" /><circle cx="11" cy="8" r="7" fill="#0b0b0b" />
          <ellipse cx="11" cy="18" rx="6" ry="6" fill="#fff" /><circle cx="8.500" cy="6" r="1.800" fill="#fff" /><circle cx="13.500" cy="6" r="1.800" fill="#fff" />
          <path d="M6 9.500h10l-5 2.500zM3 24.500h7v1.500H3zM12 24.500h7v1.500h-7z" fill="#f7a91c" /><path d="M3 12.500c5 3 11 3 16 0v3c-5 3-11 3-16 0z" fill="#ff26c0" />
          <path d="M12 1l8-1v5z" fill="#ff26c0" />
        </svg>
        <svg viewBox="0 0 25 20" className="mr-[11px] h-5 w-[25px]" fill="none" stroke="#fff" strokeWidth="1.400" aria-label="Network">
          <path d="M7 2h17v12H5V9M14 14v5M9 19h11M1 1h5v7H1zM3 8v4" />
        </svg>
        <svg viewBox="0 0 25 20" className="mr-3 h-5 w-[25px]" fill="none" stroke="#fff" strokeWidth="1.400" aria-label="Battery">
          <path d="M3 0v3M7 0v3M1 3h8v3c0 4-8 4-8 0zM5 9v8h4" /><path d="M9 6h14v11H9z" fill="#fff" /><path d="M24.500 9v5" />
        </svg>
        <svg viewBox="0 0 24 26" className="mr-3 h-[26px] w-6" fill="none" stroke="#fff" strokeWidth="1.500" aria-label="Input">
          <path d="M0 4h14M0 10h10M0 16h8M13 14h4l5-5v16l-5-5h-4z" />
        </svg>
        <svg viewBox="0 0 24 20" className="mr-[5px] h-5 w-6" fill="none" stroke="#fff" strokeWidth="1.400" aria-label="Volume">
          <path d="M1 7h4l5-5v16l-5-5H1z" /><path d="M13 7c2 2 2 4 0 6" /><path d="M16 4c4 4 4 8 0 12M19 2c5 5 5 11 0 16" stroke="#858585" />
        </svg>
        <div className="flex h-full w-[116px] flex-col items-center pt-[3px] text-[18px] leading-[28px]">
          <span>9:48</span>
          <span>2019/3/19</span>
        </div>
        <svg viewBox="0 0 25 26" className="mr-[30px] mb-1 ml-[17px] h-[26px] w-[25px]" aria-label="Notifications">
          <path d="M0 1h25v20h-6l-5 5v-5H0z" fill="#fff" /><path d="M5 7h15M5 11h15M5 15h10" stroke="#333" strokeWidth="1.500" />
        </svg>
        <span className="mr-[7px] h-full w-px bg-[#7a7a7a]" />
      </div>
      <span className="absolute right-[10px] bottom-[7px] font-['Liberation_Sans',sans-serif] text-base text-white/55">
        https://blog.csdn.net/u010801994
      </span>
    </footer>
  );
}

export default function App() {
  return (
    <div className="flex h-screen flex-col overflow-hidden bg-[#161719] font-['Open_Sans','Noto_Sans_CJK_SC',sans-serif]">
      <svg width="0" height="0" className="absolute" aria-hidden>
        <linearGradient id="grafana" x1="0" y1="0" x2="0" y2="1">
          <stop offset="0" stopColor="#f05a28" /><stop offset="1" stopColor="#fbca0a" />
        </linearGradient>
        <linearGradient id="fox" x1="1" y1="0" x2="0" y2="0.800">
          <stop offset="0" stopColor="#ffbd2e" /><stop offset="0.500" stopColor="#ff7a18" /><stop offset="1" stopColor="#f0206a" />
        </linearGradient>
        <linearGradient id="acro" x1="0" y1="0" x2="0" y2="1">
          <stop offset="0" stopColor="#f01010" /><stop offset="1" stopColor="#8c0505" />
        </linearGradient>
      </svg>
      <TabStrip />
      <NavBar />
      <div className="flex min-h-0 flex-1 font-['Roboto','Noto_Sans_CJK_SC',sans-serif]">
        <SideMenu />
        <Dashboard />
      </div>
      <Taskbar />
    </div>
  );
}
